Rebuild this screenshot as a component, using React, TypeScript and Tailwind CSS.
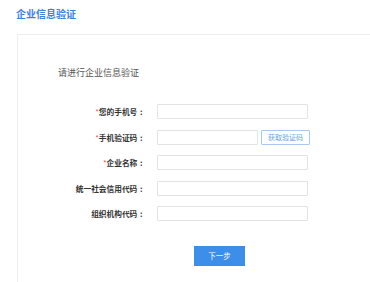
import React from "react";

const rows = [
  { label: "您的手机号", req: true, btn: false },
  { label: "手机验证码", req: true, btn: true },
  { label: "企业名称", req: true, btn: false },
  { label: "统一社会信用代码", req: false, btn: false },
  { label: "组织机构代码", req: false, btn: false },
];

export default function App() {
  return (
    <div className="w-[370px] h-[282px] bg-white overflow-hidden font-['Noto_Sans_CJK_SC',sans-serif]">
      <div className="pl-[16px] pt-[7px] text-[10px] font-bold text-[#3b82e0] leading-[13px]">企业信息验证</div>
      <div className="ml-[17px] mt-[14px] w-[400px] h-[260px] border-t border-l border-[#ededed]">
        <div className="pl-[40px] pt-[32px] text-[9px] leading-[12px] text-[#555]">请进行企业信息验证</div>
        <div className="mt-[25px] flex flex-col gap-[10.5px]">
          {rows.map((r) => (
            <div key={r.label} className="flex items-center h-[15px]">
              <div className="w-[127px] text-right text-[7.7px] leading-[15px] text-[#333] font-bold whitespace-nowrap">
                {r.req && <span className="text-[#f05050] font-normal">*</span>}
                {r.label}
                <span className="inline-block w-[1em] text-center">:</span>
              </div>
              <div className="ml-[12px] flex items-center">
                {r.btn ? (
                  <>
                    <div className="w-[101px] h-[15px] border border-[#e3e3e3] rounded-[1px]" />
                    <div className="ml-[3px] w-[49px] h-[15px] border border-[#a9c9f2] rounded-[1px] text-[7px] leading-[13px] text-center text-[#6aa3e8]">获取验证码</div>
                  </>
                ) : (
                  <div className="w-[151px] h-[15px] border border-[#e3e3e3] rounded-[1px]" />
                )}
              </div>
            </div>
          ))}
        </div>
        <div className="mt-[25px] ml-[176px] w-[51px] h-[20px] bg-[#3d8ee8] text-white text-[7.5px] leading-[20px] text-center">下一步</div>
      </div>
    </div>
  );
}
